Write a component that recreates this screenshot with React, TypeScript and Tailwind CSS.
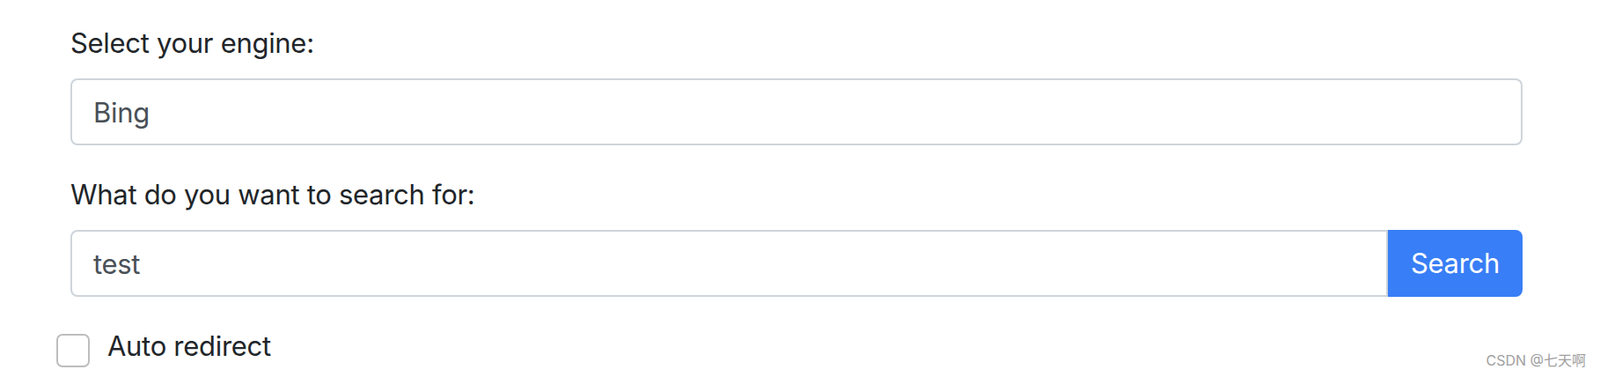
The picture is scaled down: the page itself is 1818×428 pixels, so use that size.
import React, { useState } from "react";

const font = { fontFamily: "Inter, 'Noto Sans', 'Noto Sans CJK SC', sans-serif" };

export default function App() {
  const [engine, setEngine] = useState("Bing");
  const [query, setQuery] = useState("test");
  const [auto, setAuto] = useState(false);

  return (
    <div className="relative w-[1818px] h-[428px] bg-white text-[#212529] font-['Inter','Noto_Sans',sans-serif] tracking-[-0.3px]">
      <div className="pt-[25px] pl-[80px] w-[1730px]">
        <label className="block text-[31px] leading-[48px] mb-[16px]">Select your engine:</label>
        <input
          value={engine}
          onChange={(e) => setEngine(e.target.value)}
          className="block w-full h-[76px] px-[24px] text-[31px] text-[#495057] border-2 border-[#ced4da] rounded-[8px] outline-none mb-[32px]"
        />

        <label className="block text-[31px] leading-[48px] mb-[16px]">What do you want to search for:</label>
        <div className="flex h-[76px]">
          <input
            value={query}
            onChange={(e) => setQuery(e.target.value)}
            className="flex-1 min-w-0 h-full px-[24px] text-[31px] text-[#495057] border-2 border-[#ced4da] rounded-l-[8px] outline-none"
          />
          <button className="h-full w-[153px] bg-[#387ef6] text-white text-[31px] rounded-r-[8px]">
            Search
          </button>
        </div>
      </div>

      <div className="flex items-start mt-[32px] ml-[64px]">
        <button
          onClick={() => setAuto(!auto)}
          className="mt-[10px] w-[38px] h-[38px] border-2 border-[#bdbdbd] rounded-[7px] bg-white"
        />
        <span className="ml-[20px] text-[31px] leading-[48px]">Auto redirect</span>
      </div>

      <div
        className="absolute right-[16px] bottom-[7px] text-[16px] tracking-normal text-[#a0a0a0]"
        style={font}
      >
        CSDN @七天啊
      </div>
    </div>
  );
}
